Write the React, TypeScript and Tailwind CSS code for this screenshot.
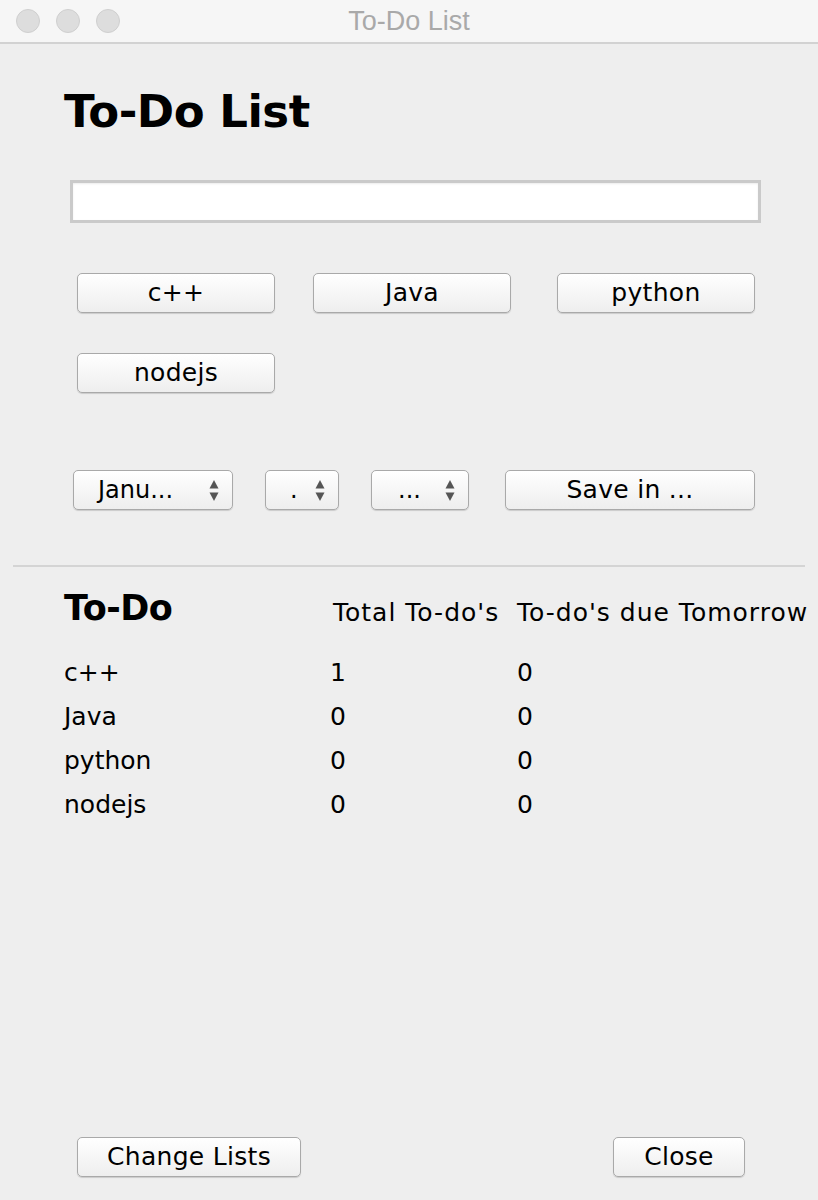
import React from 'react';

const ui = { fontFamily: '"DejaVu Sans", "Liberation Sans", sans-serif' };

const Btn: React.FC<{ label: string; className?: string }> = ({ label, className = '' }) => (
  <button
    className={`h-[40px] flex items-center justify-center rounded-[5px] border border-[#a9a9a9] bg-gradient-to-b from-[#ffffff] to-[#eeeeee] text-[25px] tracking-[0.3px] text-black shadow-[0_1px_1px_rgba(0,0,0,0.15)] ${className}`}
    style={ui}
  >
    {label}
  </button>
);

const Arrows = () => (
  <svg width="10" height="23" viewBox="0 0 10 23" className="shrink-0">
    <path d="M5 1 L9.5 9.5 L0.5 9.5 Z" fill="#555" />
    <path d="M0.5 13.5 L9.5 13.5 L5 22 Z" fill="#555" />
  </svg>
);

const Select: React.FC<{ label: string; className?: string }> = ({ label, className = '' }) => (
  <div
    className={`h-[40px] flex items-center justify-between rounded-[5px] border border-[#a9a9a9] bg-gradient-to-b from-[#ffffff] to-[#eeeeee] pr-[13px] text-[24px] text-black shadow-[0_1px_1px_rgba(0,0,0,0.15)] ${className}`}
    style={ui}
  >
    <span>{label}</span>
    <Arrows />
  </div>
);

const rows = [
  { name: 'c++', total: '1', due: '0' },
  { name: 'Java', total: '0', due: '0' },
  { name: 'python', total: '0', due: '0' },
  { name: 'nodejs', total: '0', due: '0' },
];

const App: React.FC = () => {
  return (
    <div className="w-[818px] h-[1200px] flex flex-col bg-[#eeeeee] overflow-hidden" style={ui}>
      {/* Title bar */}
      <div className="h-[44px] shrink-0 grid grid-cols-[1fr_auto_1fr] items-center bg-[#f6f6f6] border-b-2 border-[#d2d2d2]">
        <div className="flex items-center gap-[16px] pl-[16px]">
          <div className="w-[24px] h-[24px] rounded-full bg-[#dddddd] border border-[#cfcfcf]" />
          <div className="w-[24px] h-[24px] rounded-full bg-[#dddddd] border border-[#cfcfcf]" />
          <div className="w-[24px] h-[24px] rounded-full bg-[#dddddd] border border-[#cfcfcf]" />
        </div>
        <div className="text-[27px] text-[#a9a9a9]" style={{ fontFamily: '"Liberation Sans", sans-serif' }}>
          To-Do List
        </div>
        <div />
      </div>

      {/* Body */}
      <div className="flex-1 flex flex-col">
        <h1 className="ml-[64px] mt-[45px] text-[45px] leading-none font-bold tracking-[-0.5px] text-black">To-Do List</h1>

        <div className="ml-[70px] mt-[46px] w-[691px] h-[43px] bg-white border-[3px] border-[#cacaca] shadow-[inset_0_1px_2px_rgba(0,0,0,0.08)]" />

        <div className="ml-[77px] mt-[50px] flex">
          <Btn label="c++" className="w-[198px]" />
          <Btn label="Java" className="w-[198px] ml-[38px]" />
          <Btn label="python" className="w-[198px] ml-[46px]" />
        </div>
        <div className="ml-[77px] mt-[40px] flex">
          <Btn label="nodejs" className="w-[198px]" />
        </div>

        <div className="ml-[73px] mt-[77px] flex items-center">
          <Select label="Janu..." className="w-[160px] pl-[24px]" />
          <Select label="." className="w-[74px] ml-[32px] pl-[24px]" />
          <Select label="..." className="w-[98px] ml-[32px] pl-[26px]" />
          <Btn label="Save in ..." className="w-[250px] ml-[36px]" />
        </div>

        <div className="mx-[13px] mt-[55px] h-[2px] bg-[#d4d4d4]" />

        {/* Table */}
        <div className="mt-[24px] ml-[64px] grid grid-cols-[269px_184px_1fr] items-end text-[25px] tracking-[1px] text-black whitespace-nowrap">
          <div className="text-[35px] font-bold leading-none tracking-[-0.5px]">To-Do</div>
          <div className="leading-none pb-[1px]">Total To-do's</div>
          <div className="leading-none pb-[1px]">To-do's due Tomorrow</div>
        </div>
        <div className="mt-[32px] ml-[64px] flex flex-col gap-[15px] text-[25px] text-black">
          {rows.map((r) => (
            <div key={r.name} className="grid grid-cols-[266px_187px_1fr] h-[29px] items-center leading-none">
              <div>{r.name}</div>
              <div>{r.total}</div>
              <div>{r.due}</div>
            </div>
          ))}
        </div>

        <div className="flex-1" />

        <div className="ml-[77px] mb-[23px] flex">
          <Btn label="Change Lists" className="w-[224px]" />
          <Btn label="Close" className="w-[132px] ml-[312px]" />
        </div>
      </div>
    </div>
  );
};

export default App;
